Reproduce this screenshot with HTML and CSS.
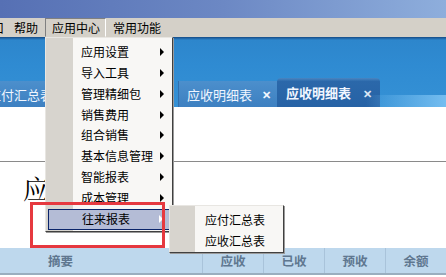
FILE: index.html
```html
<!DOCTYPE html>
<html lang="zh">
<head>
<meta charset="utf-8">
<link rel="stylesheet" href="styles.css">
</head>
<body>
<div class="app">
  <div class="titlebar"></div>
  <div class="menubar">
    <span class="mb-item mb-cut">口</span>
    <span class="mb-item">帮助</span>
    <span class="mb-item mb-open">应用中心</span>
    <span class="mb-item">常用功能</span>
  </div>
  <div class="band">
    <div class="tabs">
      <div class="tab tab-first"><span>应付汇总表</span><span class="x">✕</span></div>
      <div class="tab"><span>应收明细表</span><span class="x">✕</span></div>
      <div class="tab tab-active"><span>应收明细表</span><span class="x">✕</span></div>
    </div>
  </div>
  <div class="content">
    <div class="toparea"></div>
    <div class="title">应收明细表</div>
    <div class="thead">
      <div class="th th-memo">摘要</div>
      <div class="th">应收</div>
      <div class="th">已收</div>
      <div class="th">预收</div>
      <div class="th">余额</div>
    </div>
  </div>

  <div class="menu">
    <div class="mi"><span>应用设置</span><i class="arr"></i></div>
    <div class="mi"><span>导入工具</span><i class="arr"></i></div>
    <div class="mi"><span>管理精细包</span><i class="arr"></i></div>
    <div class="mi"><span>销售费用</span><i class="arr"></i></div>
    <div class="mi"><span>组合销售</span><i class="arr"></i></div>
    <div class="mi"><span>基本信息管理</span><i class="arr"></i></div>
    <div class="mi"><span>智能报表</span><i class="arr"></i></div>
    <div class="mi"><span>成本管理</span><i class="arr"></i></div>
    <div class="mi mi-hl"><span>往来报表</span><i class="arr arr-w"></i></div>
  </div>
  <div class="submenu">
    <div class="mi"><span>应付汇总表</span></div>
    <div class="mi"><span>应收汇总表</span></div>
  </div>
  <div class="redbox"></div>
</div>
</body>
</html>
```
FILE: styles.css
```css
* { box-sizing: border-box; }
html, body { margin: 0; padding: 0; }
body {
  width: 446px;
  height: 277px;
  overflow: hidden;
  background: #fff;
  font-family: "Noto Sans CJK SC", "Liberation Sans", sans-serif;
  font-size: 12px;
  color: #000;
}
.app { position: relative; width: 446px; height: 277px; overflow: hidden; }

.titlebar {
  height: 18px;
  background: linear-gradient(to right, #5670b4 0%, #6c88c4 50%, #8eaedc 100%);
}
.menubar {
  height: 19px;
  background: #d4d0c8;
  display: flex;
  align-items: stretch;
  font-size: 12px;
  line-height: 17px;
}
.mb-item {
  padding: 0 6px;
  border: 1px solid transparent;
  white-space: nowrap;
}
.mb-cut { margin-left: -13px; padding: 0 2px 0 4px; }
.mb-open {
  border-color: #808080 #ffffff #d4d0c8 #808080;
  padding: 0 5px 0 6px;
}

.band {
  height: 70px;
  background: linear-gradient(to bottom, #1d5f9f 0px, #2d86cc 2px, #2f8bd2 40%, #3591d5 100%);
  border-top: 1px solid #1a5591;
  display: flex;
  align-items: flex-end;
  position: relative;
}
.band::after {
  content: "";
  position: absolute;
  right: 0; bottom: 0;
  width: 80px; height: 12px;
  background: linear-gradient(to right, rgba(110,180,235,0), #74bdf0);
}
.tabs { display: flex; align-items: flex-end; height: 29px; }
.tab {
  height: 26px;
  display: flex;
  align-items: center;
  gap: 10px;
  padding: 0 6px 0 8px;
  color: #f0f6ff;
  font-size: 13px;
  background: linear-gradient(to bottom, #4c8fcc 0%, #3d80c1 100%);
  border-left: 1px solid #2f6fae;
  white-space: nowrap;
}
.tab .x { font-size: 11px; font-weight: bold; color: #f4f8ff; }
.tab-first { margin-left: -12px; width: 182px; border-left: none; margin-right: 8px; padding-left: 0; }
.tab-active {
  height: 29px;
  font-weight: bold;
  padding: 0 8px 0 9px;
  gap: 12px;
  border-radius: 4px 4px 0 0;
  border-left: none;
  background: linear-gradient(to bottom, #4a86c2 0%, #2b68aa 12%, #2662a5 100%);
}
.tab-active .x { color: #dde8f6; }

.content { display: flex; flex-direction: column; }
.toparea { height: 55px; border-bottom: 1px solid #8a8a8a; }
.title {
  height: 86px;
  padding: 11px 0 0 23px;
  font-size: 26px;
  line-height: 30px;
  font-family: "Noto Serif CJK SC", "Noto Sans CJK SC", serif;
}
.thead {
  height: 27px;
  display: flex;
  background: #bed8ed;
  border-bottom: 2px solid #9aaebf;
  color: #5f7790;
  font-weight: bold;
  font-size: 12.5px;
  line-height: 25px;
}
.th { width: 61px; text-align: center; border-left: 1px solid #a9c3da; }
.th-memo { width: 202px; text-align: left; padding-left: 48px; border-left: none; }

.menu {
  position: absolute;
  left: 45px; top: 37px;
  width: 128px; height: 195px;
  background: linear-gradient(to right, #d7d4ce 0, #d7d4ce 27px, #f8f7f5 27px);
  border: 1px solid;
  border-color: #e8e6e2 #404040 #404040 #e8e6e2;
  box-shadow: 1px 1px 0 #9a9a9a;
  padding: 4px 2px 0 2px;
}
.mi {
  height: 20.75px;
  display: flex;
  align-items: center;
  padding-left: 33px;
  position: relative;
  white-space: nowrap;
  line-height: 1;
}
.arr {
  position: absolute;
  right: 6px; top: 50%;
  margin-top: -4px;
  width: 0; height: 0;
  border-top: 4px solid transparent;
  border-bottom: 4px solid transparent;
  border-left: 4px solid #000;
}
.arr-w { border-left-color: #fff; }
.mi-hl {
  background: #b4bcd6;
  border: 1px solid #0a246a;
  margin-top: 1px;
}

.submenu {
  position: absolute;
  left: 169px; top: 205px;
  width: 115px; height: 48px;
  background: linear-gradient(to right, #d7d4ce 0, #d7d4ce 25px, #f8f7f5 25px);
  border: 1px solid;
  border-color: #e8e6e2 #404040 #404040 #e8e6e2;
  box-shadow: 1px 1px 0 #9a9a9a;
  padding: 3px 2px 0 2px;
}
.submenu .mi { height: 21px; padding-left: 33px; }

.redbox {
  position: absolute;
  left: 30px; top: 202px;
  width: 135px; height: 46px;
  border: 3px solid #e6393f;
}
```
